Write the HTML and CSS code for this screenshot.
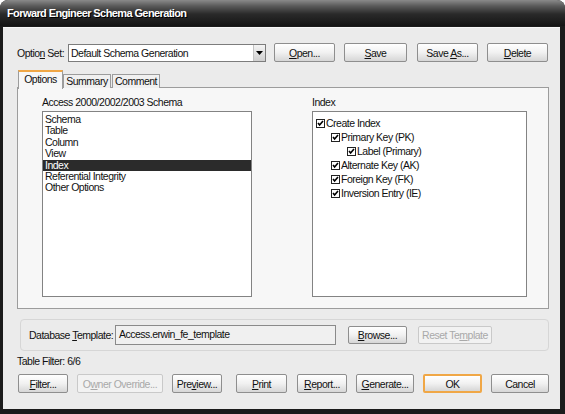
FILE: index.html
```html
<!DOCTYPE html>
<html lang="en">
<head>
    <meta charset="UTF-8">
    <title>Forward Engineer Schema Generation</title>
    <link rel="stylesheet" href="styles.css">
</head>
<body>
<div class="window">
    <div class="titlebar">Forward Engineer Schema Generation</div>

    <div class="client">
        <!-- option set row -->
        <div class="option-row">
            <span class="option-label">Optio<u>n</u> Set:</span>
            <div class="combo">
                <span class="combo-text">Default Schema Generation</span>
                <span class="combo-drop">
                    <svg width="7" height="4" viewBox="0 0 7 4"><path d="M0 0h7L3.5 4z" fill="#000"/></svg>
                </span>
            </div>
            <button class="btn w-open"><u>O</u>pen...</button>
            <button class="btn w-save"><u>S</u>ave</button>
            <button class="btn w-saveas">Save <u>A</u>s...</button>
            <button class="btn w-delete"><u>D</u>elete</button>
        </div>

        <!-- tabs -->
        <div class="tabs">
            <div class="tab active">Options</div>
            <div class="tab t-summary">Summary</div>
            <div class="tab t-comment">Comment</div>
        </div>

        <div class="panel">
            <div class="col col-left">
                <div class="caption">Access 2000/2002/2003 Schema</div>
                <div class="listbox">
                    <div class="item">Schema</div>
                    <div class="item">Table</div>
                    <div class="item">Column</div>
                    <div class="item">View</div>
                    <div class="item selected">Index</div>
                    <div class="item">Referential Integrity</div>
                    <div class="item">Other Options</div>
                </div>
            </div>
            <div class="col col-right">
                <div class="caption">Index</div>
                <div class="listbox tree">
                    <div class="node lvl0"><svg class="chk" width="9" height="9" viewBox="0 0 9 9"><rect x="0.5" y="0.5" width="8" height="8" fill="#fff" stroke="#222"/><path d="M2 4l1.6 2L7 2" fill="none" stroke="#000" stroke-width="1.6"/></svg>Create Index</div>
                    <div class="node lvl1"><svg class="chk" width="9" height="9" viewBox="0 0 9 9"><rect x="0.5" y="0.5" width="8" height="8" fill="#fff" stroke="#222"/><path d="M2 4l1.6 2L7 2" fill="none" stroke="#000" stroke-width="1.6"/></svg>Primary Key (PK)</div>
                    <div class="node lvl2"><svg class="chk" width="9" height="9" viewBox="0 0 9 9"><rect x="0.5" y="0.5" width="8" height="8" fill="#fff" stroke="#222"/><path d="M2 4l1.6 2L7 2" fill="none" stroke="#000" stroke-width="1.6"/></svg>Label (Primary)</div>
                    <div class="node lvl1"><svg class="chk" width="9" height="9" viewBox="0 0 9 9"><rect x="0.5" y="0.5" width="8" height="8" fill="#fff" stroke="#222"/><path d="M2 4l1.6 2L7 2" fill="none" stroke="#000" stroke-width="1.6"/></svg>Alternate Key (AK)</div>
                    <div class="node lvl1"><svg class="chk" width="9" height="9" viewBox="0 0 9 9"><rect x="0.5" y="0.5" width="8" height="8" fill="#fff" stroke="#222"/><path d="M2 4l1.6 2L7 2" fill="none" stroke="#000" stroke-width="1.6"/></svg>Foreign Key (FK)</div>
                    <div class="node lvl1"><svg class="chk" width="9" height="9" viewBox="0 0 9 9"><rect x="0.5" y="0.5" width="8" height="8" fill="#fff" stroke="#222"/><path d="M2 4l1.6 2L7 2" fill="none" stroke="#000" stroke-width="1.6"/></svg>Inversion Entry (IE)</div>
                </div>
            </div>
        </div>

        <!-- database template group -->
        <div class="group">
            <span class="group-label">Database <u>T</u>emplate:</span>
            <div class="textbox">Access.erwin_fe_template</div>
            <button class="btn w-browse"><u>B</u>rowse...</button>
            <button class="btn w-reset" disabled>Reset Te<u>m</u>plate</button>
        </div>

        <div class="filter-text">Table Filter: 6/6</div>

        <div class="button-row">
            <button class="btn w-filter"><u>F</u>ilter...</button>
            <button class="btn w-owner" disabled>O<u>w</u>ner Override...</button>
            <button class="btn w-preview">Pre<u>v</u>iew...</button>
            <button class="btn w-print"><u>P</u>rint</button>
            <button class="btn w-report"><u>R</u>eport...</button>
            <button class="btn w-generate"><u>G</u>enerate...</button>
            <button class="btn w-ok default">OK</button>
            <button class="btn w-cancel">Cancel</button>
        </div>
    </div>
</div>
</body>
</html>
```

FILE: styles.css
```css
* {
    margin: 0;
    padding: 0;
    box-sizing: border-box;
}

html, body {
    width: 565px;
    height: 414px;
    background: #ffffff;
    overflow: hidden;
}

body {
    font-family: "Liberation Sans", Arial, sans-serif;
    font-size: 10.5px;
    letter-spacing: -0.5px;
    color: #111;
    white-space: nowrap;
}

.window {
    width: 565px;
    height: 414px;
    display: flex;
    flex-direction: column;
    background: #1b1b1b;
    border-radius: 8px 8px 0 0;
    overflow: hidden;
}

.titlebar {
    height: 26px;
    flex: none;
    padding-left: 7px;
    line-height: 27px;
    color: #fff;
    font-weight: bold;
    font-size: 11px;
    letter-spacing: -0.6px;
    text-shadow: 1px 1px 0 #000;
    background: linear-gradient(#8a8a8a 0, #5a5a5a 6px, #2a2a2a 14px, #141414 26px);
}

.client {
    flex: 1;
    margin: 1px 5px 5px 3px;
    padding: 15px 0 0 14px;
    background: #ebebeb;
    border-top: 1px solid #f8f8f8;
}

/* ---- buttons ---- */
.btn {
    height: 19px;
    font-family: inherit;
    font-size: 10.5px;
    letter-spacing: -0.5px;
    white-space: nowrap;
    color: #111;
    border: 1px solid #8e8e8e;
    border-radius: 2px;
    background: linear-gradient(#ffffff, #f1f1f1 50%, #d6d6d6);
    flex: none;
}
.btn:disabled {
    color: #a9a9a9;
    border-color: #c9c9c9;
    background: #f2f2f2;
}
.btn.default {
    border: 2px solid #f0a746;
}

/* ---- option set ---- */
.option-row {
    display: flex;
    align-items: center;
    height: 19px;
}
.option-label {
    width: 51px;
}
.combo {
    width: 198px;
    height: 18px;
    margin-right: 8px;
    display: flex;
    align-items: center;
    background: #fff;
    border: 1px solid #7c7c7c;
}
.combo-text {
    flex: 1;
    padding-left: 2px;
}
.combo-drop {
    width: 12px;
    height: 16px;
    display: flex;
    align-items: center;
    justify-content: center;
    background: linear-gradient(#f4f4f4, #cfcfcf);
    border-left: 1px solid #c4c4c4;
}
.w-open { width: 61px; margin-right: 9px; }
.w-save { width: 63px; margin-right: 10px; }
.w-saveas { width: 61px; margin-right: 9px; }
.w-delete { width: 61px; }

/* ---- tabs ---- */
.tabs {
    display: flex;
    align-items: flex-end;
    height: 18px;
    margin-top: 8px;
    padding-left: 1px;
    position: relative;
    z-index: 1;
}
.tab {
    height: 14px;
    line-height: 13px;
    text-align: center;
    background: #f0f0f0;
    border: 1px solid #9c9c9c;
    border-bottom: none;
}
.tab.active {
    width: 45px;
    height: 19px;
    margin-bottom: -1px;
    line-height: 15px;
    background: #f7f7f7;
    border-top: 2px solid #f0a746;
}
.t-summary { width: 48px; }
.t-comment { width: 48px; margin-left: 1px; }

.panel {
    width: 532px;
    height: 222px;
    margin-top: -1px;
    display: flex;
    gap: 60px;
    padding: 8px 0 0 24px;
    background: #f7f7f7;
    border: 1px solid #9c9c9c;
}
.col-left { width: 210px; }
.col-right { width: 215px; }
.caption {
    height: 12px;
    line-height: 12px;
    margin-bottom: 3px;
}
.listbox {
    height: 186px;
    background: #fff;
    border: 1px solid #838383;
    padding-top: 2px;
}
.item {
    height: 11.4px;
    line-height: 11.4px;
    padding-left: 2px;
}
.item.selected {
    background: #2b2b2b;
    color: #fff;
}

.tree {
    padding-top: 4px;
}
.node {
    height: 14px;
    display: flex;
    align-items: center;
}
.node .chk {
    flex: none;
    margin-right: 1px;
}
.lvl0 { padding-left: 3px; }
.lvl1 { padding-left: 18px; }
.lvl2 { padding-left: 34px; }

/* ---- database template ---- */
.group {
    width: 529px;
    height: 32px;
    margin: 10px 0 0 3px;
    display: flex;
    align-items: center;
    padding-left: 8px;
    border: 1px solid #d6d6d6;
    border-radius: 4px;
}
.group-label {
    width: 86px;
}
.textbox {
    width: 221px;
    height: 20px;
    margin-right: 12px;
    padding-left: 3px;
    line-height: 16px;
    background: #f0f0f0;
    border: 1px solid #8a8a8a;
}
.w-browse { width: 59px; height: 18px; margin-right: 11px; }
.w-reset { width: 74px; height: 18px; }

.filter-text {
    height: 12px;
    line-height: 12px;
    margin-top: 4px;
}

/* ---- bottom buttons ---- */
.button-row {
    display: flex;
    margin-top: 7px;
    padding-left: 1px;
}
.w-filter { width: 50px; margin-right: 9px; }
.w-owner { width: 86px; margin-right: 9px; }
.w-preview { width: 50px; margin-right: 14px; }
.w-print { width: 51px; margin-right: 10px; }
.w-report { width: 50px; margin-right: 9px; }
.w-generate { width: 58px; margin-right: 9px; }
.w-ok { width: 59px; margin-right: 9px; }
.w-cancel { width: 58px; }
```
